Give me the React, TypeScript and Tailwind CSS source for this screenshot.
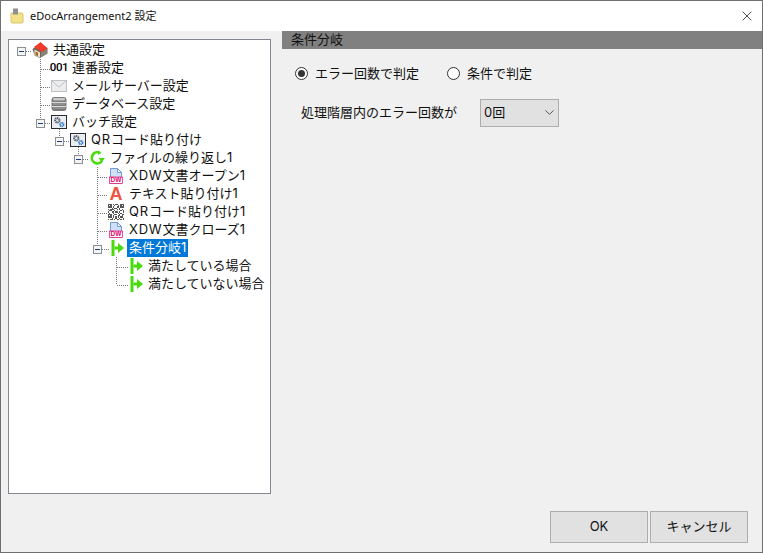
import { X, ChevronDown } from 'lucide-react'
import type { ReactNode } from 'react'

const FONT = "font-['Inter','Noto_Sans_CJK_JP',sans-serif]"

function House() {
  return (
    <svg width="16" height="16" viewBox="0 0 16 16">
      <path d="M0.5 7L2.5 13.5 8 16 15.5 11.5V6L8.5 1z" fill="#6f675e" />
      <path d="M2.5 7.5L8 10.5V15.5L2.5 13z" fill="#efe6d2" />
      <path d="M9 10.5L15 7V11L9 15z" fill="#8b8378" />
      <path d="M3.5 9.5L6 10.8V14.2L3.5 13z" fill="#a85f16" />
      <path d="M2 5L8.7 0 15.5 6.7 9.3 10z" fill="#ee3b2a" />
    </svg>
  )
}

function Mail() {
  return (
    <svg width="16" height="16" viewBox="0 0 16 16">
      <rect x="0.5" y="2.5" width="15" height="11" fill="#ececec" stroke="#bcc1c6" />
      <path d="M1 3l7 6 7-6" fill="none" stroke="#bcc1c6" />
    </svg>
  )
}

function Database() {
  return (
    <svg width="16" height="16" viewBox="0 0 16 16">
      <rect x="0.5" y="1" width="15" height="14" rx="3" fill="#7c7c7c" />
      <rect x="2" y="2" width="12" height="2.5" rx="1.2" fill="#c9c9c9" />
      <path d="M0.5 6.5h15M0.5 10.5h15" stroke="#dcdcdc" />
      <path d="M2 8h12M2 12h12" stroke="#a3a3a3" />
    </svg>
  )
}

function Batch() {
  return (
    <svg width="16" height="16" viewBox="0 0 16 16">
      <rect x="0.5" y="1.5" width="15" height="13" fill="#e9edf1" stroke="#2b2b2b" />
      <circle cx="6.3" cy="6.3" r="2.2" fill="#dfe6ee" stroke="#59636d" strokeWidth="2" strokeDasharray="1.3 0.5" />
      <circle cx="10.8" cy="10.5" r="1.7" fill="#fff" stroke="#2f78c8" strokeWidth="1.8" strokeDasharray="1.1 0.4" />
    </svg>
  )
}

function Loop() {
  return (
    <svg width="16" height="16" viewBox="0 0 16 16">
      <path d="M10.5 2.6A5.6 5.6 0 1 0 13 11" fill="none" stroke="#46dc0c" strokeWidth="2.6" />
      <path d="M9.5 8h6.5L12.8 12z" fill="#46dc0c" />
      <path d="M9 0.5l3.5 2.3L9 5z" fill="#46dc0c" />
    </svg>
  )
}

function DocIcon() {
  return (
    <svg width="16" height="16" viewBox="0 0 16 16">
      <path d="M2.5 0.5h7l4 4v11h-11z" fill="#cfe0f7" stroke="#6f9bd6" />
      <path d="M9.5 0.5v4h4z" fill="#fff" stroke="#6f9bd6" />
      <rect x="1.5" y="9" width="13" height="6.5" fill="#fff" stroke="#e5006e" strokeWidth="0.7" />
      <text x="8" y="14.4" textAnchor="middle" fontSize="6.5" fontWeight="700" fill="#e5006e" fontFamily="Liberation Sans, sans-serif">DW</text>
    </svg>
  )
}

const QR_CELLS = [
  '1110101100111',
  '1010010010101',
  '1110100110111',
  '0001011001000',
  '1011100101010',
  '0110010000101',
  '1001101101001',
  '0100100010100',
  '1110011001011',
  '1010100011010',
  '1110101010110',
  '0001001001001',
  '1011010110101',
]

function QrCode() {
  return (
    <svg width="16" height="16" viewBox="0 0 13 13" shapeRendering="crispEdges">
      {QR_CELLS.flatMap((row, y) =>
        row.split('').map((c, x) => (c === '1' ? <rect key={`${x}-${y}`} x={x} y={y} width="1" height="1" fill="#555" /> : null)),
      )}
    </svg>
  )
}

function Branch() {
  return (
    <svg width="16" height="18" viewBox="0 0 16 18">
      <rect x="3.5" y="1" width="3" height="16" fill="#46dc0c" />
      <rect x="6.5" y="7.5" width="4" height="3" fill="#46dc0c" />
      <path d="M10 4L16 9l-6 5z" fill="#46dc0c" />
    </svg>
  )
}

type Node = { label: string; latin?: string; icon: ReactNode; pad: string; selected?: boolean }

const NODES: Node[] = [
  { label: '共通設定', icon: <House />, pad: 'pl-[23px]' },
  {
    label: '連番設定',
    icon: <span className="font-['Roboto',sans-serif] text-[11.5px] font-medium tracking-[-0.3px] text-black">001</span>,
    pad: 'pl-[42px]',
  },
  { label: 'メールサーバー設定', icon: <Mail />, pad: 'pl-[42px]' },
  { label: 'データベース設定', icon: <Database />, pad: 'pl-[42px]' },
  { label: 'バッチ設定', icon: <Batch />, pad: 'pl-[42px]' },
  { latin: 'QR', label: 'コード貼り付け', icon: <Batch />, pad: 'pl-[61px]' },
  { label: 'ファイルの繰り返し1', icon: <Loop />, pad: 'pl-[80px]' },
  { latin: 'XDW', label: '文書オープン1', icon: <DocIcon />, pad: 'pl-[99px]' },
  {
    label: 'テキスト貼り付け1',
    icon: <span className="font-['Liberation_Sans',sans-serif] text-[18px] font-bold text-[#ee5544]">A</span>,
    pad: 'pl-[99px]',
  },
  { latin: 'QR', label: 'コード貼り付け1', icon: <QrCode />, pad: 'pl-[99px]' },
  { latin: 'XDW', label: '文書クローズ1', icon: <DocIcon />, pad: 'pl-[99px]' },
  { label: '条件分岐1', icon: <Branch />, pad: 'pl-[99px]', selected: true },
  { label: '満たしている場合', icon: <Branch />, pad: 'pl-[118px]' },
  { label: '満たしていない場合', icon: <Branch />, pad: 'pl-[118px]' },
]

// expander boxes, in tree-panel coordinates
const BOXES: [number, number][] = [
  [12, 9],
  [31, 81],
  [50, 99],
  [69, 117],
  [88, 207],
]

function TreeLines() {
  const dotted = { stroke: '#777', strokeDasharray: '1 1', fill: 'none' }
  return (
    <svg className="absolute left-0 top-[2px]" width="261" height="300" shapeRendering="crispEdges">
      <path
        {...dotted}
        d="M31.5 17V77M31.5 27H42M31.5 45H42M31.5 63H42M17 9.5H23M36 81.5H42M50.5 87V95M55 99.5H61M69.5 105V113M74 117.5H80M88.5 125V203M88.5 135H99M88.5 153H99M88.5 171H99M88.5 189H99M93 207.5H101M107.5 215V243M107.5 225H120M107.5 243H120"
      />
      {BOXES.map(([x, y]) => (
        <g key={`${x}-${y}`}>
          <rect x={x - 4} y={y - 4} width="8" height="8" fill="#f4f4f4" stroke="#8a8f96" />
          <path d={`M${x - 2} ${y}H${x + 3}`} stroke="#1c3f7c" />
        </g>
      ))}
    </svg>
  )
}

function TreeRow({ node }: { node: Node }) {
  return (
    <div className={`flex h-[18px] items-center gap-[3px] ${node.pad}`}>
      <span className="flex h-[18px] w-4 shrink-0 items-center justify-center">{node.icon}</span>
      <span
        className={`flex h-[18px] items-center whitespace-nowrap px-[2px] text-[13px] ${
          node.selected ? 'bg-[#0078d7] text-white' : 'text-[#111]'
        }`}
      >
        {node.latin && <span className="tracking-[0.8px]">{node.latin}</span>}
        {node.label}
      </span>
    </div>
  )
}

function Radio({ label, checked }: { label: string; checked?: boolean }) {
  return (
    <label className="flex items-center gap-[7px]">
      <span className="flex h-[13px] w-[13px] items-center justify-center rounded-full border border-[#333] bg-white">
        {checked && <span className="h-[7px] w-[7px] rounded-full bg-[#333]" />}
      </span>
      <span className="text-[13px] text-[#111]">{label}</span>
    </label>
  )
}

export default function App() {
  return (
    <div className={`flex h-[553px] w-[763px] flex-col border border-[#6f6f6f] bg-[#f0f0f0] ${FONT}`}>
      <div className="flex h-[30px] shrink-0 items-center bg-white pl-[9px] pr-[7px]">
        <svg width="14" height="16" viewBox="0 0 14 16">
          <path d="M1 5h11l1 1v8l-1 1H2l-1-1z" fill="#f2e38a" stroke="#d8c766" />
          <rect x="3" y="0.5" width="5" height="6" fill="#8f8f8f" />
        </svg>
        <span className="ml-[6px] font-['Noto_Sans','Noto_Sans_CJK_JP',sans-serif] text-[11px] text-[#111]">eDocArrangement2 設定</span>
        <X className="ml-auto text-[#222]" size={16} strokeWidth={1.2} />
      </div>

      <div className="flex min-h-0 flex-1">
        <div className="w-[281px] shrink-0 pl-[7px] pt-[8px]">
          <div className="relative h-[455px] w-[263px] border border-[#828790] bg-white">
            <TreeLines />
            <div className="relative pt-[1px]">
              {NODES.map((node) => (
                <TreeRow key={`${node.latin ?? ''}${node.label}`} node={node} />
              ))}
            </div>
          </div>
        </div>

        <div className="flex-1">
          <div className="flex h-[18px] items-center bg-[#808080] pl-[9px] text-[13px] text-[#111]">条件分岐</div>
          <div className="flex gap-[28px] pl-[13px] pt-[15px]">
            <Radio label="エラー回数で判定" checked />
            <Radio label="条件で判定" />
          </div>
          <div className="flex items-center pl-[19px] pt-[15px]">
            <span className="w-[179px] text-[13px] text-[#111]">処理階層内のエラー回数が</span>
            <div className="flex h-[28px] w-[79px] items-center justify-between border border-[#adadad] bg-[#e1e1e1] pl-[3px] pr-[1px] text-[13px] text-[#111]">
              <span>0回</span>
              <ChevronDown size={15} strokeWidth={1.3} className="text-[#333]" />
            </div>
          </div>
        </div>
      </div>

      <div className="flex shrink-0 justify-end gap-[2px] pb-[9px] pr-[14px]">
        <button className="h-[32px] w-[98px] border border-[#adadad] bg-[#e1e1e1] text-[13px] text-[#111]">OK</button>
        <button className="h-[32px] w-[98px] border border-[#adadad] bg-[#e1e1e1] text-[13px] text-[#111]">キャンセル</button>
      </div>
    </div>
  )
}
